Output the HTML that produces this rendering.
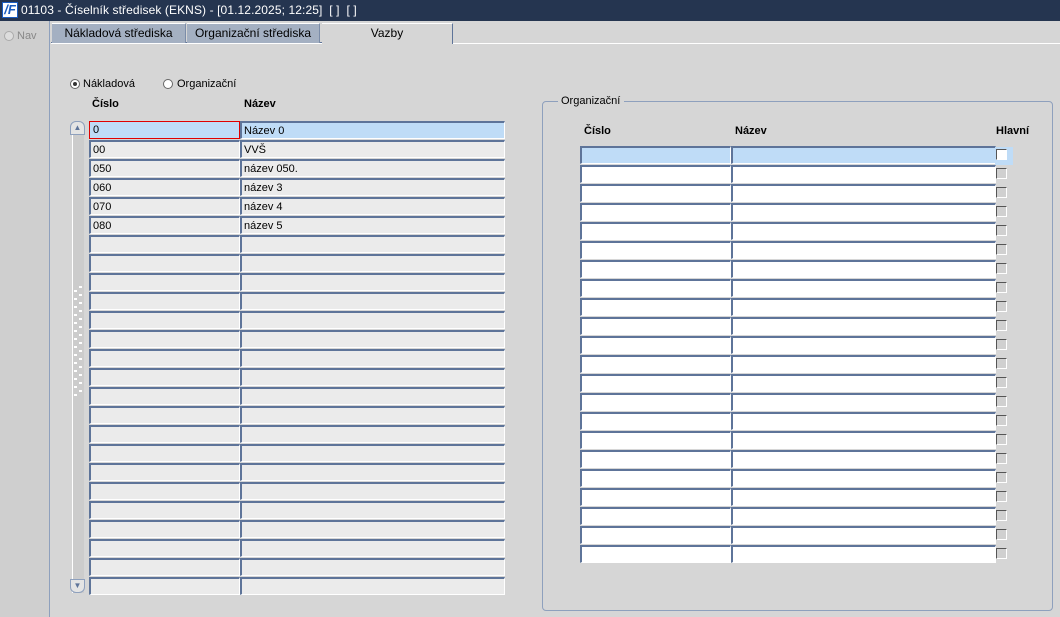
<!DOCTYPE html>
<html><head><meta charset="utf-8"><style>
*{margin:0;padding:0;box-sizing:border-box}
body{width:1060px;height:617px;overflow:hidden;background:#d6d6d6;font-family:"Liberation Sans",Arial,sans-serif;font-size:11px;color:#000;position:relative}
.a{position:absolute}
.title{left:0;top:0;width:1060px;height:21px;background:#253550;color:#fff;font-size:12px;line-height:20px;padding-left:21px;white-space:nowrap;letter-spacing:0.1px}
.logo{left:2px;top:2px;width:16px;height:16px;background:#fff;border:1px solid #1a5cc0;color:#1a5cc0;font-weight:bold;font-style:italic;font-size:13px;line-height:14px;text-align:center}
.nav{left:0;top:21px;width:50px;height:596px;background:#cfcfcf;border-right:1px solid #8ea0bd}
.tab{top:23px;height:20px;line-height:19px;font-size:12px;text-align:center;background:#a4b0c2;border-top:1px solid #fff;border-right:1px solid #7b8ca8}
.f{position:absolute;height:18px;background:#ebebeb;border-top:2px solid #5e7499;border-left:2px solid #5e7499;border-right:1px solid #fff;border-bottom:1px solid #fff;padding-left:2px;line-height:17px;font-size:11px;white-space:nowrap}
.w{background:#fff}
.s{background:#bfdcf7}
.h{position:absolute;font-weight:bold;font-size:11px}
.cb{position:absolute;width:11px;height:11px;background:#d0d0d0;border-top:1px solid #555;border-left:1px solid #555;border-right:1px solid #fff;border-bottom:1px solid #fff}
</style></head><body>
<div class="a title">01103 - Číselník středisek (EKNS) - [01.12.2025; 12:25]&nbsp; [ ]&nbsp; [ ]</div>
<div class="a logo">/F</div>
<div class="a nav"></div>
<div class="a" style="left:4px;top:31px;width:10px;height:10px;border-radius:50%;border:1px solid #aaa;background:#ddd"></div>
<div class="a" style="left:17px;top:30px;color:#888;font-size:11px">Nav</div>
<div class="a" style="left:51px;top:43px;width:1009px;height:1px;background:#fff"></div>
<div class="a" style="left:51px;top:42px;height:1px;background:#5e7499;width:272px"></div>
<div class="a tab" style="left:52px;width:134px">Nákladová střediska</div>
<div class="a tab" style="left:187px;width:133px">Organizační střediska</div>
<div class="a tab" style="left:322px;width:131px;background:#d6d6d6;border-right:1px solid #5e7499;height:21px">Vazby</div>

<div class="a" style="left:70px;top:79px;width:10px;height:10px;border-radius:50%;background:#fff;border:1px solid #666"><div style="margin:2px;width:4px;height:4px;border-radius:50%;background:#333"></div></div>
<div class="a" style="left:83px;top:78px">Nákladová</div>
<div class="a" style="left:163px;top:79px;width:10px;height:10px;border-radius:50%;background:#fff;border:1px solid #666"></div>
<div class="a" style="left:177px;top:78px">Organizační</div>
<div class="h" style="left:92px;top:98px">Číslo</div>
<div class="h" style="left:244px;top:98px">Název</div>

<div class="a" style="left:72px;top:123px;width:12px;height:470px;background:#cccccc;border-left:1px solid #fff"></div>
<div class="a" style="left:70px;top:121px;width:15px;height:14px;border:1px solid #8ea0bd;border-radius:6px 6px 0 0;background:#e4e4e4;text-align:center;font-size:8px;line-height:12px;color:#5e7499">▲</div>
<div class="a" style="left:70px;top:579px;width:15px;height:14px;border:1px solid #8ea0bd;border-radius:0 0 6px 6px;background:#e4e4e4;text-align:center;font-size:8px;line-height:12px;color:#5e7499">▼</div>
<div class="a" style="left:74px;top:290px;width:3px;height:108px;background:repeating-linear-gradient(#fff 0 2px,transparent 2px 8px)"></div>
<div class="a" style="left:79px;top:286px;width:3px;height:108px;background:repeating-linear-gradient(#fff 0 2px,transparent 2px 8px)"></div>

<div id="L"></div>
<div class="a" style="left:542px;top:101px;width:511px;height:510px;border:1px solid #8ea0bd;border-radius:4px"></div>
<div class="a" style="left:558px;top:95px;background:#d6d6d6;padding:0 4px 0 3px;font-size:11px">Organizační</div>
<div class="h" style="left:584px;top:125px">Číslo</div>
<div class="h" style="left:735px;top:125px">Název</div>
<div class="h" style="left:996px;top:125px">Hlavní</div>
<div id="R"></div>
<div class="a" style="left:995px;top:147px;width:18px;height:18px;background:#bfdcf7"></div>
<script>
var L='',d=[['0','Název 0'],['00','VVŠ'],['050','název 050.'],['060','název 3'],['070','název 4'],['080','název 5']];
for(var i=0;i<25;i++){var y=121+i*19,r=d[i]||['',''];
L+='<div class="f'+(i==0?' s':'')+'" style="left:89px;top:'+y+'px;width:151px'+(i==0?';border:1px solid #e00000;padding-left:3px;line-height:17px':'')+'">'+r[0]+'</div>';
L+='<div class="f'+(i==0?' s':'')+'" style="left:240px;top:'+y+'px;width:265px">'+r[1]+'</div>';}
document.getElementById('L').outerHTML=L;
var R='';
for(var i=0;i<22;i++){var y=146+i*19,c=i==0?' s':' w';
R+='<div class="f'+c+'" style="left:580px;top:'+y+'px;width:151px"></div>';
R+='<div class="f'+c+'" style="left:731px;top:'+y+'px;width:265px"></div>';
R+='<div class="cb" style="left:996px;top:'+(y+3)+'px;z-index:2'+(i==0?';background:#fff':'')+'"></div>';}
document.getElementById('R').outerHTML=R;
</script>
</body></html>
